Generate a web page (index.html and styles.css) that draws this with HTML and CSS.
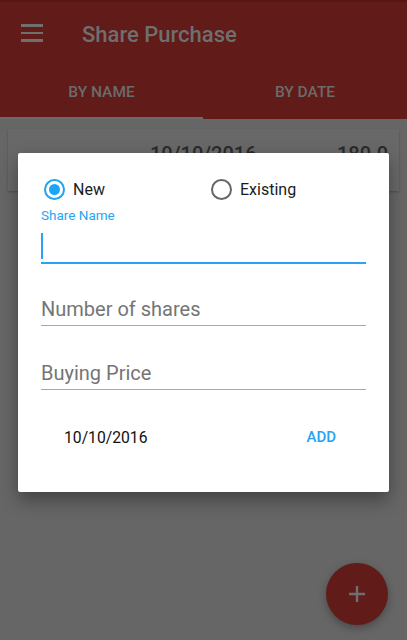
FILE: index.html
```html
<!DOCTYPE html>
<html>
<head>
<meta charset="utf-8">
<link rel="stylesheet" href="styles.css">
</head>
<body>
<div class="screen">
  <header class="appbar">
    <div class="toolbar">
      <span class="menu"><i></i><i></i><i></i></span>
      <span class="title">Share Purchase</span>
    </div>
    <nav class="tabs">
      <div class="tab active">BY NAME</div>
      <div class="tab">BY DATE</div>
    </nav>
  </header>
  <main class="content">
    <div class="card">
      <span class="card-date">10/10/2016</span>
      <span class="card-price">180.0</span>
    </div>
  </main>
  <div class="dialog">
    <div class="radios">
      <label class="radio-item"><span class="radio on"></span>New</label>
      <label class="radio-item"><span class="radio"></span>Existing</label>
    </div>
    <div class="field focused">
      <div class="float-label">Share Name</div>
      <div class="input"><span class="cursor"></span></div>
    </div>
    <div class="field">
      <div class="input hint">Number of shares</div>
    </div>
    <div class="field">
      <div class="input hint">Buying Price</div>
    </div>
    <div class="actions">
      <span class="date">10/10/2016</span>
      <span class="add">ADD</span>
    </div>
  </div>
  <div class="fab"><svg width="20" height="20" viewBox="0 0 20 20"><path d="M10 2v16M2 10h16" stroke="#6f6f6f" stroke-width="2.4"/></svg></div>
</div>
</body>
</html>
```
FILE: styles.css
```css
* { box-sizing: border-box; }
html, body { margin: 0; padding: 0; }
body { font-family: Roboto, "Noto Sans", sans-serif; background: #666; }
.screen { position: relative; width: 407px; height: 640px; overflow: hidden; background: #666; }

.appbar { background: #611b18; border-top: 2px solid #561714; }
.toolbar { height: 64px; display: flex; align-items: center; }
.menu { display: flex; flex-direction: column; gap: 5px; margin-left: 21px; width: 22px; margin-top: -2px; }
.menu i { display: block; height: 2.5px; background: #6f6f6f; }
.title { margin-left: 39px; font-size: 22px; font-weight: 500; color: #6f6f6f; }

.tabs { display: flex; height: 53px; }
.tab { flex: 0 0 203px; display: flex; align-items: center; justify-content: center; font-size: 15.5px; font-weight: 500; color: #6b6b6b; border-bottom: 2px solid transparent; padding-top: 1px; }
.tab + .tab { flex: 1; }
.tab.active { border-bottom-color: #6a6a6a; }

.content { padding: 10px 8px; }
.card { height: 62px; background: #686868; box-shadow: 0 1px 2px rgba(0,0,0,0.25); display: flex; align-items: flex-start; padding-top: 13px; font-size: 20px; font-weight: 500; color: #2a2a2a; }
.card-date { margin-left: 142px; }
.card-price { margin-left: auto; margin-right: 11px; }

.dialog { position: absolute; left: 18px; top: 153px; width: 371px; height: 339px; background: #fff; border-radius: 2px; box-shadow: 0 8px 18px rgba(0,0,0,0.35); padding: 24px 23px 0 23px; }
.radios { display: flex; height: 24px; padding-left: 3px; }
.radio-item { display: flex; align-items: center; font-size: 16px; color: #1c1c1c; flex: 0 0 167px; }
.radio-item + .radio-item { flex: 1 1 auto; }
.radio { width: 21px; height: 21px; border-radius: 50%; border: 2px solid #666; margin-right: 8px; position: relative; flex: none; }
.radio.on { border-color: #1ea4f4; }
.radio.on::after { content: ""; position: absolute; left: 3px; top: 3px; width: 11px; height: 11px; border-radius: 50%; background: #1ea4f4; }

.field { border-bottom: 1px solid #a8a8a8; }
.field.focused { border-bottom: 2px solid #29a3f2; margin-top: 6px; }
.float-label { font-size: 13.5px; color: #2aa4f2; line-height: 16px; }
.focused .input { height: 39px; padding-top: 10px; }
.cursor { display: block; width: 2px; height: 26px; background: #29a3f2; }
.hint { font-size: 20px; line-height: 24px; color: #757575; }
.field:nth-child(3) { margin-top: 33px; }
.field:nth-child(3) .input { height: 28px; }
.field:nth-child(4) { margin-top: 35px; }
.field:nth-child(4) .input { height: 28px; }

.actions { display: flex; align-items: center; height: 20px; margin-top: 37px; font-size: 15.7px; }
.date { margin-left: 23px; color: #111; }
.add { margin-left: auto; margin-right: 30px; color: #26a3f3; font-weight: 500; font-size: 15px; }

.fab { position: absolute; left: 326px; top: 563px; width: 62px; height: 62px; border-radius: 50%; background: #611b18; box-shadow: 0 3px 8px rgba(0,0,0,0.3); display: flex; align-items: center; justify-content: center; }
```
